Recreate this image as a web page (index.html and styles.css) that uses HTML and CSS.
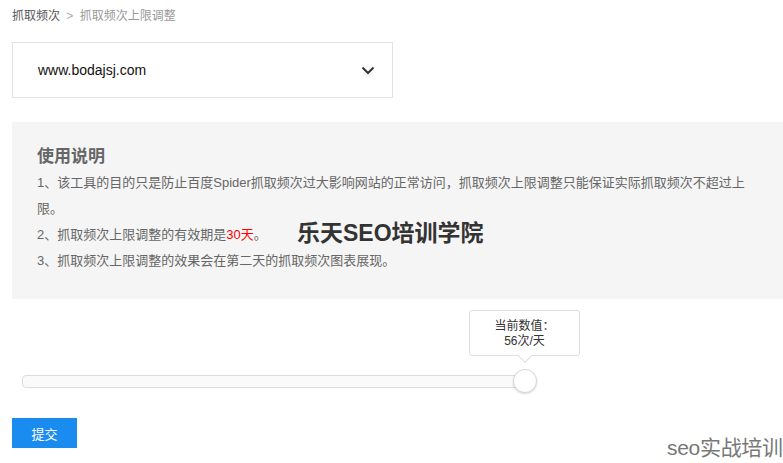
FILE: index.html
```html
<!DOCTYPE html>
<html lang="zh-CN">
<head>
  <meta charset="UTF-8" />
  <meta name="viewport" content="width=device-width, initial-scale=1" />
  <title>抓取频次上限调整</title>
  <link rel="stylesheet" href="styles.css">
</head>
<body>
  <div class="page">
    <!-- Breadcrumb -->
    <div class="crumbs">
      <span class="crumb-link">抓取频次</span>
      <span class="crumb-sep">&gt;</span>
      <span class="crumb-current">抓取频次上限调整</span>
    </div>

    <!-- Site select -->
    <div class="site-select">
      <span class="site-name">www.bodajsj.com</span>
      <svg class="chevron" width="14" height="9" viewBox="0 0 14 9">
        <path d="M1.5 1.5 L7 7 L12.5 1.5" fill="none" stroke="#333" stroke-width="2" />
      </svg>
    </div>

    <!-- Usage notes -->
    <div class="notes">
      <h3 class="notes-title">使用说明</h3>
      <p>1、该工具的目的只是防止百度Spider抓取频次过大影响网站的正常访问，抓取频次上限调整只能保证实际抓取频次不超过上限。</p>
      <p>2、抓取频次上限调整的有效期是<span class="hl">30天</span>。</p>
      <p>3、抓取频次上限调整的效果会在第二天的抓取频次图表展现。</p>
      <div class="mark">乐天SEO培训学院</div>
    </div>

    <!-- Slider -->
    <div class="slider">
      <div class="tip">
        当前数值：<br>56次/天
      </div>
      <div class="thumb"></div>
    </div>

    <button class="submit" type="button">提交</button>

    <div class="corner-mark">seo实战培训</div>
  </div>
</body>
</html>
```

FILE: styles.css
```css
* {
  box-sizing: border-box;
  margin: 0;
  padding: 0;
}

body, html {
  height: 100%;
  font-family: 'Liberation Sans', 'Noto Sans CJK SC', sans-serif;
  background: #fff;
  color: #333;
  overflow: hidden;
}

.page {
  position: relative;
  height: 100%;
  padding-left: 12px;
}

/* Breadcrumb */
.crumbs {
  padding-top: 8px;
  font-size: 12px;
  line-height: 16px;
}

.crumb-link {
  color: #555;
}

.crumb-sep {
  color: #aaa;
  margin: 0 3px;
}

.crumb-current {
  color: #999;
}

/* Select */
.site-select {
  margin-top: 18px;
  width: 381px;
  height: 56px;
  border: 1px solid #e2e2e2;
  display: flex;
  align-items: center;
  justify-content: space-between;
  padding: 0 17px 0 25px;
}

.site-name {
  font-size: 14px;
  color: #111;
}

.chevron {
  display: block;
}

/* Notes panel */
.notes {
  position: relative;
  margin-top: 24px;
  height: 177px;
  background: #f5f5f5;
  padding: 22px 34px 0 25px;
  color: #666;
  font-size: 13px;
  line-height: 26px;
}

.notes-title {
  font-size: 17px;
  font-weight: 700;
  color: #666;
  line-height: 26px;
}

.hl {
  color: #f00;
}

.mark {
  position: absolute;
  left: 285px;
  top: 99px;
  font-size: 23px;
  line-height: 24px;
  font-weight: 700;
  color: #333;
  white-space: nowrap;
}

/* Slider */
.slider {
  position: relative;
  margin: 76px 0 0 10px;
  width: 508px;
  height: 13px;
  border: 1px solid #dcdcdc;
  border-radius: 4px;
  background: #fafafa;
}

.thumb {
  position: absolute;
  left: 490px;
  top: -7px;
  width: 24px;
  height: 24px;
  border-radius: 50%;
  background: #fff;
  border: 1px solid #d6d6d6;
  box-shadow: 0 1px 2px rgba(0, 0, 0, 0.15);
}

.tip {
  position: absolute;
  left: 446px;
  top: -66px;
  width: 111px;
  height: 46px;
  background: #fff;
  border: 1px solid #dedede;
  border-radius: 3px;
  font-size: 12px;
  line-height: 15px;
  color: #333;
  text-align: center;
  padding-top: 8px;
}

.tip::after {
  content: '';
  position: absolute;
  left: 50%;
  bottom: -6px;
  width: 9px;
  height: 9px;
  margin-left: -5px;
  background: #fff;
  border-right: 1px solid #dedede;
  border-bottom: 1px solid #dedede;
  transform: rotate(45deg);
}

/* Submit */
.submit {
  display: block;
  margin-top: 30px;
  width: 65px;
  height: 30px;
  border: none;
  background: #1a8bef;
  color: #fff;
  font-family: inherit;
  font-size: 13px;
  cursor: pointer;
}

.corner-mark {
  position: absolute;
  left: 667px;
  top: 436px;
  font-size: 21px;
  line-height: 24px;
  color: #777;
  letter-spacing: -0.3px;
  white-space: nowrap;
}
```
